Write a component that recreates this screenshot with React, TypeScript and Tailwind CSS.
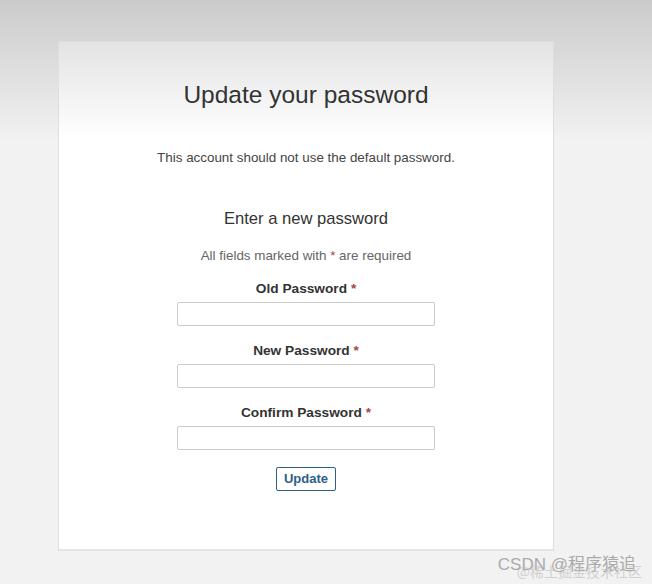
const fields = ["Old Password", "New Password", "Confirm Password"];

function Field({ label }: { label: string }) {
  return (
    <div className="flex flex-col items-center mt-[15px] first:mt-0">
      <label className="h-5 leading-5 text-[13.7px] font-bold text-[#333]">
        {label} <span className="text-[#a94442]">*</span>
      </label>
      <input
        type="password"
        className="mt-[3px] w-[258px] h-6 border border-[#ccc] rounded-[2px] bg-white outline-none"
      />
    </div>
  );
}

export default function App() {
  return (
    <div
      className="relative w-[652px] h-[584px] overflow-hidden bg-gradient-to-b from-[#cbcbcb] to-[#f2f2f2] to-[24%]"
      style={{ fontFamily: '"Liberation Sans", Arial, sans-serif' }}
    >
      <div className="pt-[41px] pl-[58px]">
        <div className="w-[496px] h-[510px] flex flex-col items-center bg-gradient-to-b from-[#e3e3e3] to-white to-[19%] border border-[#dedede] border-b-2 border-b-[#e4e4e4] pt-[39px]">
          <h1 className="h-7 leading-7 text-[24.5px] text-[#333]">Update your password</h1>
          <p className="mt-[39px] h-5 leading-5 text-[13.4px] text-[#444]">
            This account should not use the default password.
          </p>
          <h2 className="mt-[39px] h-6 leading-6 text-[16.6px] text-[#333]">Enter a new password</h2>
          <p className="mt-[15px] h-5 leading-5 text-[13.4px] text-[#666]">
            All fields marked with <span className="text-[#a94442]">*</span> are required
          </p>
          <div className="mt-[13px] flex flex-col">
            {fields.map((f) => (
              <Field key={f} label={f} />
            ))}
          </div>
          <button className="mt-[17px] w-[60px] h-6 border border-[#2d5f88] rounded-[2px] bg-white text-[13px] font-bold text-[#2d5f88]">
            Update
          </button>
        </div>
      </div>
      <div
        className="absolute right-[16px] bottom-[7px] text-[17px] text-[#999] opacity-80"
        style={{ fontFamily: '"Liberation Sans", "Noto Sans CJK SC", sans-serif' }}
      >
        CSDN @程序猿追
      </div>
      <div
        className="absolute right-[10px] bottom-[2px] text-[14px] text-[#bbb] opacity-60"
        style={{ fontFamily: '"Noto Sans CJK SC", sans-serif' }}
      >
        @稀土掘金技术社区
      </div>
    </div>
  );
}
